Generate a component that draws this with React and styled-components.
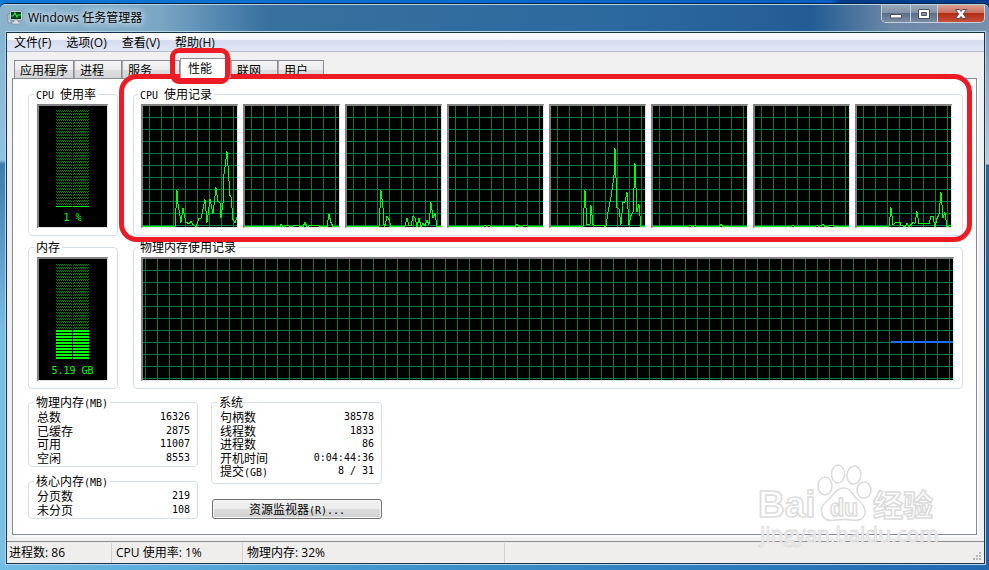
import React from "react";
import styled, { createGlobalStyle, css } from "styled-components";

const uiFont = `"Open Sans", "Noto Sans CJK SC", sans-serif`;
const dialogFont = `"Noto Sans CJK SC", sans-serif`;

const menus = ["文件(F)", "选项(O)", "查看(V)", "帮助(H)"];

const tabs = [
  { name: "应用程序", width: 60 },
  { name: "进程", width: 48 },
  { name: "服务", width: 58 },
  { name: "性能", width: 51, active: true },
  { name: "联网", width: 47 },
  { name: "用户", width: 46 },
];

const cores = [
  "0,120 32,120 34,84 35,97 38,116 40,102 43,116 46,117 48,115 50,118 53,120 56,112 58,112 62,93 64,116 67,93 70,107 73,81 75,95 77,96 78,111 80,97 81,68 84,45 87,89 88,90 90,113 92,116 94,111",
  "0,120 35,120 36,118 38,120 42,119 46,120 50,119 58,120 60,116 62,120 66,119 82,120 84,108 86,116 88,120 94,120",
  "0,120 32,120 34,84 36,101 37,118 38,120 40,110 42,113 44,120 58,120 60,112 62,119 64,119 66,110 68,111 70,120 72,112 74,120 76,117 78,119 80,114 82,118 84,96 86,111 88,107 90,120 94,120",
  "0,120 34,120 36,119 38,120 40,119 42,120 66,120 68,118 70,120 78,119 80,120 94,120",
  "0,120 32,120 34,84 36,118 39,118 40,99 42,118 44,119 52,119 55,120 57,106 60,91 63,69 64,42 66,101 68,102 70,118 72,96 74,96 76,86 78,118 80,109 82,106 84,57 86,105 88,98 90,120 94,120",
  "0,120 35,120 37,119 39,120 42,119 44,120 66,120 68,118 70,120 94,120",
  "0,120 36,120 38,119 40,120 60,120 62,119 64,120 68,118 70,120 78,119 80,120 94,120",
  "0,120 32,120 34,101 36,118 39,116 43,116 44,119 48,120 50,117 52,120 56,116 58,117 60,105 62,117 72,117 74,110 76,110 78,120 80,112 82,108 84,86 86,111 88,106 90,120 94,119",
];

const physical = [
  ["总数", "16326"],
  ["已缓存", "2875"],
  ["可用", "11007"],
  ["空闲", "8553"],
];

const kernel = [
  ["分页数", "219"],
  ["未分页", "108"],
];

const system = [
  ["句柄数", "38578"],
  ["线程数", "1833"],
  ["进程数", "86"],
  ["开机时间", "0:04:44:36"],
  [
    <>
      提交<Mono>(GB)</Mono>
    </>,
    "8 / 31",
  ],
];

function Mono({ children }) {
  return <MonoText>{children}</MonoText>;
}

const Chart = ({ trace, label }) => (
  <Screen $line={6}>
    <svg viewBox="0 0 94 121" preserveAspectRatio="none" role="img" aria-label={label}>
      <polyline
        points={trace}
        transform="translate(0 .5)"
        fill="none"
        stroke="#00ff00"
        strokeWidth="1"
        shapeRendering="crispEdges"
      />
    </svg>
  </Screen>
);

// 32 cells, lit from the bottom; the last one is thin when almost idle
const Meter = ({ id, lit, top, thin, children }) => {
  const bottom = top + 96;
  const start = bottom - lit * 3;
  return (
    <MeterBox>
      <svg width="33" height="106" shapeRendering="crispEdges" aria-hidden="true">
        <defs>
          <pattern id={id} width="2" height="3" y={top} patternUnits="userSpaceOnUse">
            <rect width="1" height="1" fill="#008a00" />
            <rect x="1" y="1" width="1" height="1" fill="#008a00" />
          </pattern>
          <pattern id={id + "-lit"} width="2" height="3" y={top} patternUnits="userSpaceOnUse">
            <rect width="2" height="2" fill="#00ff00" />
          </pattern>
        </defs>
        {[0, 17].map((x) => (
          <g key={x}>
            <rect x={x} y={top} width="16" height={start - top} fill={`url(#${id})`} />
            {thin ? (
              <rect x={x} y={bottom} width="16" height="1" fill="#00ff00" />
            ) : (
              <rect x={x} y={start} width="16" height={lit * 3} fill={`url(#${id}-lit)`} />
            )}
          </g>
        ))}
      </svg>
      <span>{children}</span>
    </MeterBox>
  );
};

const Figures = ({ rows }) => (
  <Table>
    <tbody>
      {rows.map(([name, value]) => (
        <tr key={value}>
          <th scope="row">{name}</th>
          <td>{value}</td>
        </tr>
      ))}
    </tbody>
  </Table>
);

const Watermark = () => (
  <Mark viewBox="0 0 186 90" width="186" height="90" aria-label="Baidu 经验">
    <g fill="#fff" stroke="#dcdcdc" strokeWidth="1.6">
      <text x="1" y="55" fontSize="37" fontWeight="700">
        Bai
      </text>
      <ellipse cx="68" cy="24" rx="7" ry="9" />
      <ellipse cx="81" cy="12" rx="6.5" ry="9" />
      <ellipse cx="97" cy="13" rx="7" ry="9" transform="rotate(8 97 13)" />
      <ellipse cx="107" cy="28" rx="7" ry="8" />
      <path d="M87 26c-8 0-10 7-15 11-6 5-9 9-7 15 2 7 9 7 14 6 6-1 10-1 16 0 5 1 12 0 13-7 1-6-3-10-8-14-5-5-6-11-13-11Z" />
      <text x="73" y="54" fontSize="23" fontWeight="700">
        du
      </text>
      <text x="116" y="54" fontSize="30" fontWeight="700">
        经验
      </text>
      <text x="3" y="80" fontSize="21" strokeWidth="1" className="site">
        jingyan.baidu.com
      </text>
    </g>
  </Mark>
);

const App = () => {
  return (
    <Desktop>
      <GlobalStyle />
      <Window>
        <TitleBar>
          <svg width="16" height="16" viewBox="0 0 16 16" aria-hidden="true">
            <path d="M1 4h3v9H1z" fill="#c9ced3" stroke="#6f7b86" strokeWidth=".6" />
            <path d="M3 1h12v9H3z" fill="#e4e8eb" stroke="#85909a" strokeWidth=".6" />
            <path d="M4 2h10v7H4z" fill="#083c16" />
            <path d="M4 6h2l2-3 2 4 1-2h3" fill="none" stroke="#2ee64a" strokeWidth="1.2" />
            <path d="M7 10h4v2h2v2H5v-2h2z" fill="#dfe2e5" stroke="#7d8790" strokeWidth=".6" />
          </svg>
          <h1>Windows 任务管理器</h1>
          <Caption>
            <CaptionButton type="button" aria-label="最小化" $width={28}>
              <svg width="14" height="12" viewBox="0 0 14 12">
                <path d="M1.5 6.5h11v3.500h-11z" fill="#fff" stroke="#4c5366" />
              </svg>
            </CaptionButton>
            <CaptionButton type="button" aria-label="最大化" $width={27}>
              <svg width="14" height="12" viewBox="0 0 14 12">
                <path d="M1.5 1.5h11v9h-11z" fill="#fff" stroke="#4c5366" />
                <path d="M4.5 4.5h5v3h-5z" fill="#8a93a8" stroke="#4c5366" />
              </svg>
            </CaptionButton>
            <CaptionButton type="button" aria-label="关闭" $width={47} $close>
              <svg width="14" height="12" viewBox="0 0 14 12">
                <path
                  d="M1.5 1.5h4l1.5 2 1.5-2h4L9.300 6l3.200 4.500h-4L7 8.500l-1.500 2h-4L4.700 6z"
                  fill="#fff"
                  stroke="#554a57"
                />
              </svg>
            </CaptionButton>
          </Caption>
        </TitleBar>
        <Client>
          <MenuBar>
            {menus.map((menu) => (
              <button type="button" key={menu}>
                {menu}
              </button>
            ))}
          </MenuBar>
          <Tabs role="tablist">
            {tabs.map(({ name, width, active }) => (
              <Tab
                type="button"
                role="tab"
                key={name}
                aria-selected={!!active}
                $width={width}
                $active={active}
              >
                {name}
                {active && <TabRing />}
              </Tab>
            ))}
          </Tabs>
          <Panel role="tabpanel">
            <Graphs>
              <Group $right={9}>
                <legend>
                  <Mono>CPU </Mono>使用率
                </legend>
                <Meter id="cpu" top={4} lit={0} thin>
                  1 %
                </Meter>
              </Group>
              <Group $left={7} $right={10}>
                <legend>
                  <Mono>CPU </Mono>使用记录
                </legend>
                <Cores>
                  {cores.map((trace, index) => (
                    <Chart key={index} trace={trace} label={`CPU ${index}`} />
                  ))}
                </Cores>
                <GroupRing />
              </Group>
              <Group $right={9}>
                <legend>内存</legend>
                <Meter id="memory" top={5} lit={10}>
                  5.19 GB
                </Meter>
              </Group>
              <Group $left={7} $right={8}>
                <legend>物理内存使用记录</legend>
                <Screen $line={2}>
                  <svg viewBox="0 0 810 121" preserveAspectRatio="none" role="img" aria-label="内存">
                    <path d="M748 83h62" stroke="#1a6dff" strokeWidth="2" />
                  </svg>
                </Screen>
              </Group>
            </Graphs>
            <Details>
              <Column $width={170}>
                <Group $right={7} $bottom={2} $flat>
                  <legend>
                    物理内存<Mono>(MB)</Mono>
                  </legend>
                  <Figures rows={physical} />
                </Group>
                <Group $right={7} $bottom={2} $flat>
                  <legend>
                    核心内存<Mono>(MB)</Mono>
                  </legend>
                  <Figures rows={kernel} />
                </Group>
              </Column>
              <Column $width={171}>
                <Group $right={7} $bottom={6} $flat>
                  <legend>系统</legend>
                  <Figures rows={system} />
                </Group>
                <MonitorButton type="button">
                  资源监视器<Mono>(R)...</Mono>
                </MonitorButton>
              </Column>
            </Details>
            <Watermark />
          </Panel>
          <StatusBar>
            <Status $width={105}>进程数: 86</Status>
            <Status $width={131}>CPU 使用率: 1%</Status>
            <Status $width={262}>物理内存: 32%</Status>
            <svg width="9" height="9" viewBox="0 0 9 9" aria-hidden="true">
              <path
                d="M6 0h2v2H6zM3 3h2v2H3zM6 3h2v2H6zM0 6h2v2H0zM3 6h2v2H3zM6 6h2v2H6z"
                fill="#b8b8b8"
              />
            </svg>
          </StatusBar>
        </Client>
      </Window>
    </Desktop>
  );
};

const GlobalStyle = createGlobalStyle`
  *, *::before, *::after {
    box-sizing: border-box;
  }
  body {
    margin: 0;
    color: #000;
    font: 12px/15px ${dialogFont};
  }
  button {
    margin: 0;
    padding: 0;
    border: 0;
    color: inherit;
    background: none;
    font: inherit;
  }
`;

const MonoText = styled.span`
  font-family: "DejaVu Sans Mono", monospace;
  font-size: 10px;
  line-height: 0;
  white-space: pre;
`;

const Desktop = styled.div`
  min-height: 100vh;
  padding-top: 3px;
  display: flex;
  flex-direction: column;
  background: linear-gradient(90deg, #0c78d8, #0a5fc0 84%, #003d8c 85%);
`;

const Window = styled.main`
  flex: 1;
  display: flex;
  flex-direction: column;
  border-top: 1px solid #0d2440;
  border-radius: 6px 6px 0 0;
  background:
    linear-gradient(90deg, #6fbde4, #3f93cd 40%, #1f68ae) bottom / 100% 6px no-repeat,
    linear-gradient(#7f9cbd, #bccbdd 132px, #2a6299 133px, #1f5fa3) right 28px / 4px 100% no-repeat,
    linear-gradient(#86b4d0, #8cc4e2 128px, #3a7db2 132px, #78bfe4 300px) left 28px / 6px 100% no-repeat,
    linear-gradient(90deg, #8ab4ce, #7ba6c4 16%, #37719f 27%, #2b689d 65%, #235c94 82%, #6c87a6 90%, #7890ae);
`;

const TitleBar = styled.header`
  height: 27px;
  padding: 0 4px 0 7px;
  display: flex;
  align-items: center;
  gap: 5px;
  border-top: 1px solid #b5d3e6;
  border-radius: 6px 6px 0 0;
  h1 {
    margin: 0;
    flex: 1;
    font: 12px/18px ${uiFont};
    text-shadow: 0 0 6px #fff, 0 0 10px #e6f2fa;
  }
`;

const Caption = styled.div`
  display: flex;
  align-self: flex-start;
  border: 1px solid #c4d0dd;
  border-top: 0;
  border-radius: 0 0 5px 5px;
  overflow: hidden;
`;

const CaptionButton = styled.button`
  width: ${({ $width }) => $width}px;
  height: 17px;
  display: grid;
  place-items: center;
  background: linear-gradient(#9ba8b9, #8291a6 48%, #5c6f89 50%, #7d8da3);
  & + & {
    border-left: 1px solid #c4d0dd;
  }
  ${({ $close }) =>
    $close &&
    css`
      background: linear-gradient(#dda194, #c9705f 46%, #b02c13 50%, #c9513a);
    `}
`;

const Client = styled.div`
  flex: 1;
  margin: 1px 4px 6px 6px;
  display: flex;
  flex-direction: column;
  border: 1px solid #17324d;
  outline: 1px solid #b4d6ea;
  background: #f0f0f0;
`;

const MenuBar = styled.nav`
  height: 19px;
  padding: 0 7px;
  display: flex;
  align-items: center;
  gap: 15px;
  border-bottom: 1px solid #b6bccc;
  background: linear-gradient(#fff, #f3f5fb 38%, #d5dcee 42%, #e0e6f5);
  font-family: ${uiFont};
`;

const Tabs = styled.div`
  padding: 6px 7px 0;
  display: flex;
  align-items: flex-end;
`;

const Tab = styled.button`
  position: relative;
  width: ${({ $width }) => $width}px;
  height: 18px;
  padding: 0 5px;
  border: 1px solid #898c95;
  border-bottom: 0;
  background: linear-gradient(#f4f4f4, #ececec 50%, #dedede 54%, #d4d4d4);
  line-height: 16px;
  text-align: left;
  white-space: nowrap;
  & + & {
    border-left-color: #a5a8b0;
  }
  ${({ $active }) =>
    $active &&
    css`
      z-index: 2;
      height: 20px;
      padding: 0 7px 2px;
      background: #fff;
    `}
`;

const Ring = styled.span`
  position: absolute;
  border: 5px solid #ed1c24;
  pointer-events: none;
`;

const TabRing = styled(Ring)`
  inset: -11px 0 -6px -11px;
  border-radius: 9px;
`;

// the fieldset's own box starts below its legend, so the top reaches further
const GroupRing = styled(Ring)`
  z-index: 1;
  inset: -28px -10px -7px -15px;
  border-radius: 18px;
`;

const Panel = styled.section`
  position: relative;
  flex: 1;
  margin: 0 7px 6px 5px;
  padding: 8px 13px 10px 15px;
  border: 1px solid #868a99;
  background: #fff;
  box-shadow: 2px 2px #fafafa;
`;

const Graphs = styled.div`
  display: grid;
  grid-template-columns: 90px 1fr;
  gap: 4px 15px;
`;

const Group = styled.fieldset`
  position: relative;
  min-width: 0;
  margin: 0;
  padding: ${({ $flat }) => ($flat ? 0 : 2)}px ${({ $right }) => $right}px
    ${({ $bottom = 7 }) => $bottom}px ${({ $left = 8 }) => $left}px;
  border: 1px solid #d5dfe5;
  border-radius: 4px;
  legend {
    height: 15px;
    margin-left: -3px;
    padding: 0 2px;
    line-height: 13px;
    white-space: nowrap;
  }
`;

const Cores = styled.div`
  display: grid;
  grid-template-columns: repeat(8, 1fr);
  gap: 5px;
`;

const screen = css`
  height: 124px;
  border: 1px solid #e3e3e3;
  border-top: 2px solid #828282;
  border-left: 2px solid #828282;
  background-color: #000;
`;

const Screen = styled.div`
  ${screen}
  min-width: 0;
  background-image: linear-gradient(#008040 1px, transparent 1px),
    linear-gradient(90deg, #008040 1px, transparent 1px);
  background-size: 12px 12px;
  background-position: 0 11px, ${({ $line }) => $line}px 0;
  svg {
    display: block;
    width: 100%;
    height: 121px;
  }
`;

const MeterBox = styled.div`
  ${screen}
  padding-right: 1px;
  display: flex;
  flex-direction: column;
  align-items: center;
  color: #00ff00;
  font: 10px/11px "DejaVu Sans Mono", monospace;
`;

const Details = styled.div`
  margin-top: 6px;
  display: flex;
  align-items: flex-start;
  gap: 13px;
`;

const Column = styled.div`
  width: ${({ $width }) => $width}px;
  display: flex;
  flex-direction: column;
  gap: 7px;
`;

const Table = styled.table`
  width: 100%;
  border-collapse: collapse;
  line-height: 13px;
  tr {
    height: 13px;
  }
  tr:nth-child(even) {
    height: 14px;
  }
  th,
  td {
    padding: 0;
    font-weight: 400;
    text-align: left;
    white-space: nowrap;
  }
  td {
    font-family: "DejaVu Sans Mono", monospace;
    font-size: 10px;
    text-align: right;
  }
`;

const MonitorButton = styled.button`
  height: 20px;
  margin: 8px 0 0 1px;
  padding-bottom: 2px;
  border: 1px solid #707070;
  border-radius: 3px;
  background: linear-gradient(#f2f2f2, #ebebeb 48%, #dddddd 50%, #cfcfcf);
  box-shadow: inset 0 0 0 1px #f8f8f8;
`;

const Mark = styled.svg`
  position: absolute;
  right: 33px;
  bottom: -18px;
  font-family: "Liberation Sans", "Noto Sans CJK SC", sans-serif;
  .site {
    font-family: "Open Sans", sans-serif;
  }
`;

const StatusBar = styled.footer`
  height: 22px;
  padding: 1px 2px 0 0;
  display: flex;
  border-top: 1px solid #8c8c8c;
  background: #f0eded;
  font: 12px/19px ${uiFont};
  svg {
    margin: auto 0 2px auto;
  }
`;

const Status = styled.div`
  width: ${({ $width }) => $width}px;
  padding-left: 2px;
  border-right: 1px solid #d2d0d0;
  white-space: nowrap;
  & + & {
    padding-left: 4px;
  }
`;

export default App;
